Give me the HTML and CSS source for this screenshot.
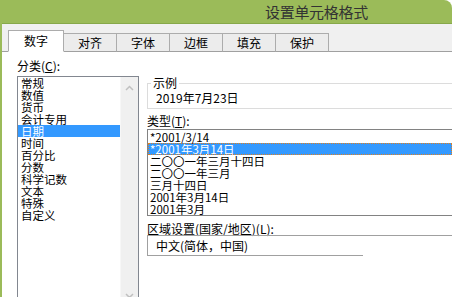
FILE: index.html
```html
<!DOCTYPE html>
<html lang="zh-CN">
<head>
<meta charset="utf-8">
<link rel="stylesheet" href="styles.css">
</head>
<body>
<div class="dialog">
  <div class="titlebar"><span class="title">设置单元格格式</span></div>
  <div class="tabstrip">
    <div class="tab active">数字</div>
    <div class="tab">对齐</div>
    <div class="tab">字体</div>
    <div class="tab">边框</div>
    <div class="tab">填充</div>
    <div class="tab">保护</div>
  </div>
  <div class="panel">
    <div class="leftcol">
      <div class="label">分类(<u>C</u>):</div>
      <div class="catlist">
        <div class="items">
          <div class="item">常规</div>
          <div class="item">数值</div>
          <div class="item">货币</div>
          <div class="item">会计专用</div>
          <div class="item selected">日期</div>
          <div class="item">时间</div>
          <div class="item">百分比</div>
          <div class="item">分数</div>
          <div class="item">科学记数</div>
          <div class="item">文本</div>
          <div class="item">特殊</div>
          <div class="item">自定义</div>
        </div>
        <div class="scrollbar">
          <svg class="arrow up" width="9" height="6" viewBox="0 0 9 6"><path d="M1 5 L4.5 1.5 L8 5" fill="none" stroke="#c0c0c0" stroke-width="1.5"/></svg>
          <svg class="arrow down" width="9" height="6" viewBox="0 0 9 6"><path d="M1 1 L4.5 4.5 L8 1" fill="none" stroke="#c0c0c0" stroke-width="1.5"/></svg>
        </div>
      </div>
    </div>
    <div class="rightcol">
      <fieldset class="sample">
        <legend>示例</legend>
        <div class="sample-value">2019年7月23日</div>
      </fieldset>
      <div class="label type-label">类型(<u>T</u>):</div>
      <div class="typelist">
        <div class="row">*2001/3/14</div>
        <div class="row selected">*2001年3月14日</div>
        <div class="row">二〇〇一年三月十四日</div>
        <div class="row">二〇〇一年三月</div>
        <div class="row">三月十四日</div>
        <div class="row">2001年3月14日</div>
        <div class="row">2001年3月</div>
      </div>
      <div class="label locale-label">区域设置(国家/地区)(<u>L</u>):</div>
      <div class="locale">中文(简体，中国)</div>
    </div>
  </div>
</div>
</body>
</html>
```
FILE: styles.css
```css
html, body {
  margin: 0;
  padding: 0;
  background: #ffffff;
}
body {
  width: 455px;
  height: 297px;
  overflow: hidden;
  font-family: "Noto Sans CJK SC", "DejaVu Sans", sans-serif;
  font-size: 12px;
  color: #000;
}
.dialog {
  width: 450px;
  height: 297px;
  border-left: 2px solid #9bbb59;
  border-top-right-radius: 8px;
  overflow: hidden;
  background: #ffffff;
}
.titlebar {
  height: 23px;
  background: #9bbb59;
  border-bottom: 1px solid #86a84a;
  padding-left: 263px;
  display: flex;
  align-items: center;
}
.title {
  font-size: 15px;
  line-height: 17px;
  color: #333333;
  letter-spacing: -0.3px;
}
.tabstrip {
  background: #f0f0f0;
  border-bottom: 1px solid #a0a0a0;
  display: flex;
  align-items: flex-end;
  padding-left: 6px;
  box-sizing: border-box;
  height: 28px;
}
.tab {
  width: 52px;
  height: 17px;
  margin-bottom: -1px;
  border: 1px solid #acacac;
  border-bottom: 1px solid #a0a0a0;
  border-left: none;
  background: #ececec;
  text-align: center;
  line-height: 17px;
  font-size: 12px;
}
.tab.active {
  width: 54px;
  height: 20px;
  line-height: 19px;
  border-left: 1px solid #acacac;
  border-bottom-color: #ffffff;
  background: #ffffff;
  margin-right: -1px;
  position: relative;
  z-index: 1;
}
.tab.active + .tab {
  border-left: 1px solid #acacac;
}
.panel {
  display: grid;
  grid-template-columns: 122px 1fr;
  column-gap: 8px;
  padding-left: 15px;
  padding-top: 7px;
  height: 250px;
}
.label {
  line-height: 14px;
  height: 14px;
  white-space: nowrap;
}
.catlist {
  margin-top: 3px;
  height: 240px;
  border: 1px solid #828790;
  border-bottom: none;
  display: flex;
}
.items {
  flex: 1;
}
.item {
  height: 12px;
  line-height: 12px;
  font-size: 11.5px;
  padding-left: 3px;
  white-space: nowrap;
}
.item.selected {
  background: #3399ff;
  color: #ffffff;
}
.scrollbar {
  width: 17px;
  background: #f0f0f0;
  position: relative;
  border-left: 1px solid #f7f7f7;
}
.arrow {
  position: absolute;
  left: 4px;
}
.arrow.up { top: 8px; }
.arrow.down { top: 216px; }
.rightcol {
  padding-top: 18px;
}
.sample {
  margin: 0;
  padding: 0 0 0 8px;
  border: 1px solid #dcdcdc;
  border-right: none;
  height: 32px;
  box-sizing: border-box;
  min-width: 0;
}
.sample legend {
  padding: 0 2px;
  margin-left: -5px;
  line-height: 12px;
  font-size: 12px;
}
.sample-value {
  line-height: 14px;
  margin-top: 2px;
}
.type-label {
  margin-top: 5px;
}
.typelist {
  margin-top: 1px;
  border: 1px solid #828282;
  border-right: none;
  padding-top: 1px;
  height: 84px;
}
.row {
  height: 12px;
  line-height: 12px;
  font-size: 11.5px;
  padding-left: 2px;
  white-space: nowrap;
}
.row.selected {
  background: #3399ff;
  color: #ffffff;
  outline: 1px dotted #e08020;
  outline-offset: -1px;
}
.locale-label {
  margin-top: 6px;
  height: 13px;
  line-height: 13px;
}
.locale {
  margin-top: 0;
  height: 19px;
  line-height: 19px;
  padding-left: 8px;
  border-left: 1px solid #a0a0a0;
  border-top: 1px solid #a0a0a0;
  position: relative;
}
.locale::after {
  content: "";
  position: absolute;
  left: -1px;
  bottom: -1px;
  width: 216px;
  border-bottom: 1px solid #a0a0a0;
}
```
